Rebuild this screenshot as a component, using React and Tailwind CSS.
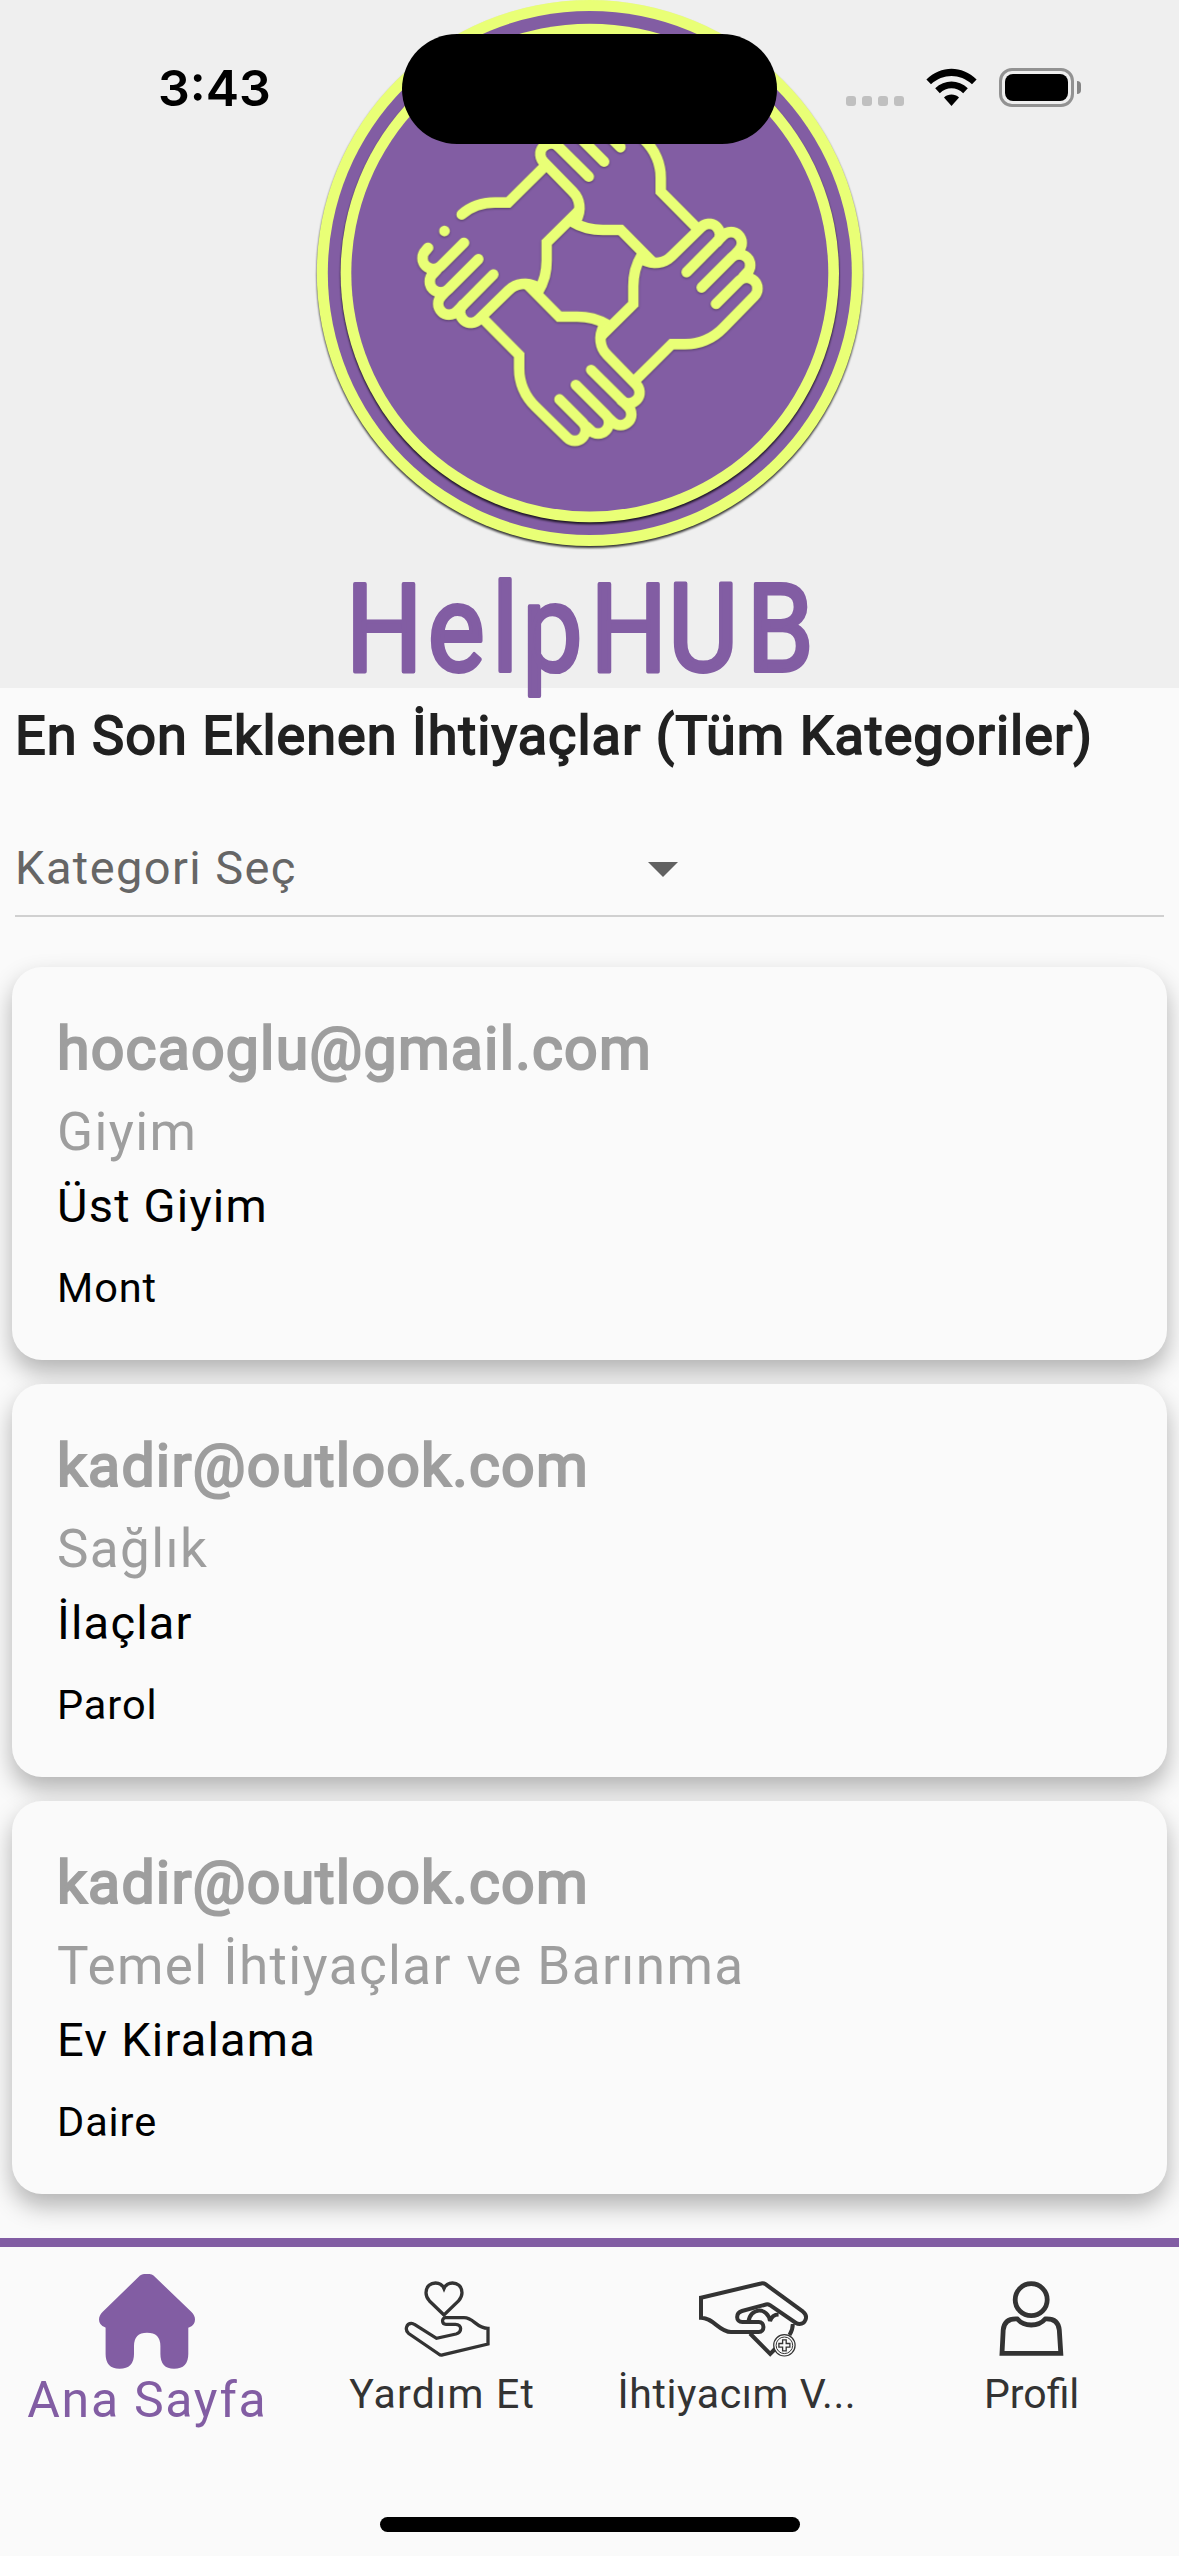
const YELLOW = "#e9ff76";
const PURPLE = "#825da3";

const needs = [
  { email: "hocaoglu@gmail.com", category: "Giyim", sub: "Üst Giyim", item: "Mont" },
  { email: "kadir@outlook.com", category: "Sağlık", sub: "İlaçlar", item: "Parol" },
  { email: "kadir@outlook.com", category: "Temel İhtiyaçlar ve Barınma", sub: "Ev Kiralama", item: "Daire" },
];

function Hand({ angle, open }) {
  return (
    <g transform={`rotate(${angle} 568.5 430)`}>
      {open ? (
        <>
          <path d="M250 568L356 675V715C356 755 368 788 392 815" />
          <path d="M441.500 866.500h.1" />
          <path d="M492 916L500 923A32 32 0 0 0 546 877L477 808" />
        </>
      ) : (
        <path d="M250 568L356 675V715C356 765 375 800 405 830L500 923A32 32 0 0 0 546 877L477 808" />
      )}
      <path d="M558 890L570 901A32 32 0 0 0 616 855L526 765" />
      <path d="M625 865L637 876A32 32 0 0 0 683 830L572 720" />
      <path d="M664 812A32 32 0 0 0 706 763L620 675C597 652 594 618 610 588" />
      <path d="M385 468L476 560H530C565 560 592 567 618 583" />
    </g>
  );
}

function Emblem() {
  return (
    <svg className="block h-[552px] w-[552px]" viewBox="313.500 0 552 552" fill="none">
      <circle className="drop-shadow-[0_2px_1px_rgba(0,0,0,0.8)]" cx="589.300" cy="273" r="273" fill={YELLOW} />
      <circle cx="589.300" cy="273" r="262" fill={PURPLE} />
      <circle className="drop-shadow-[0_2px_1px_rgba(0,0,0,0.8)]" cx="589.300" cy="273" r="249.200" fill={YELLOW} />
      <circle cx="589.300" cy="273" r="238.500" fill={PURPLE} />
      <g className="drop-shadow-[0_1px_1px_rgba(0,0,0,0.35)]">
        <g transform="translate(400 130) scale(.33333)" stroke={YELLOW} strokeWidth="32" strokeLinecap="round">
          <Hand angle={0} />
          <Hand angle={90} open />
          <Hand angle={180} />
          <Hand angle={270} />
        </g>
      </g>
    </svg>
  );
}

function Wordmark() {
  return (
    <svg className="absolute top-[540px] left-[310px] h-[172px] w-[560px]" viewBox="-20 -20 560 172">
      <text
        transform="scale(.88 1)"
        x="18.3 111 184 218.5 296 384.5 473.5"
        y="111"
        fontFamily="Roboto, sans-serif"
        fontSize="122"
        fill={PURPLE}
        stroke={PURPLE}
        strokeWidth="4"
        strokeLinejoin="round"
      >
        HelpHUB
      </text>
    </svg>
  );
}

function StatusBar() {
  return (
    <div className="absolute inset-x-0 top-0 h-[144px]">
      <div className="absolute top-[58px] left-[158px] font-[Inter,sans-serif] text-[50px] leading-[60px] font-semibold text-black">3:43</div>
      <div className="absolute top-[34px] left-[402px] h-[110px] w-[375px] rounded-full bg-black" />
      <div className="absolute top-[96px] left-[846px] flex gap-[6px]">
        {[0, 1, 2, 3].map((i) => (
          <span key={i} className="size-[10px] rounded-[3px] bg-[#c0c0c0]" />
        ))}
      </div>
      <svg className="absolute top-[68px] left-[926px] h-[39px] w-[51px]" viewBox="0 0 51 39">
        <path d="M.4 11.500C15-2.700 36-2.700 50.600 11.500L46 16.300C34 5.200 17 5.200 5 16.300Z" />
        <path d="M9.200 20.300C18.500 11.300 32.500 11.300 41.800 20.300L37.200 25.200C30.500 18.700 20.500 18.700 13.800 25.200Z" />
        <path d="M18 29.400C22.400 25.600 28.600 25.600 33 29.400L25.500 38Z" />
      </svg>
      <div className="absolute top-[68px] left-[999px] h-[39px] w-[75px] rounded-[13px] border-3 border-[#929292] p-[3px]">
        <div className="h-full w-full rounded-[8px] bg-black" />
      </div>
      <div className="absolute top-[81px] left-[1077px] h-[13px] w-[4px] rounded-r-full bg-[#858585]" />
    </div>
  );
}

function NeedCard({ need }) {
  return (
    <article className="h-[393px] rounded-[30px] bg-[#fafafa] px-[45px] pt-[46px] shadow-[0_12px_24px_rgba(0,0,0,0.29)]">
      <h2 className="text-[59px] leading-[72px] tracking-[1.2px] text-[#9e9e9e] [-webkit-text-stroke:2.2px_#9e9e9e]">{need.email}</h2>
      <p className="mt-[14px] text-[53px] leading-[66px] tracking-[1.4px] text-[#9e9e9e]">{need.category}</p>
      <p className="mt-[11px] text-[47px] leading-[60px] tracking-[1.2px] text-black">{need.sub}</p>
      <p className="mt-[25px] text-[41.5px] leading-[54px] tracking-[0.9px] text-black">{need.item}</p>
    </article>
  );
}

function HomeIcon() {
  return (
    <svg className="h-[95px] w-[96px]" viewBox="0 0 96 95" fill={PURPLE}>
      <path d="M41 1.500Q43 0 45 0H50.500Q53 0 54.500 1.500L92.500 38Q96 41.500 96 45.500Q96 51 90.500 53.300Q89.300 53.500 89.300 54V80Q89.300 94.700 75 94.700Q61.400 94.700 61.400 80V72Q61.400 58.700 48 58.700Q35 58.700 35 72V80Q35 94.700 20.500 94.700Q6.600 94.700 6.600 80V54Q6.600 53.500 6 53.300Q0 51 0 45.500Q0 41.500 3.500 38Z" />
    </svg>
  );
}

function HeartHandIcon() {
  return (
    <svg className="h-[76px] w-[98px]" viewBox="-11 0 98 76" fill="none" stroke="#333" strokeWidth="3.300">
      <path d="M40 34L25.500 20C22 16 22 13 22 11.700C22 5 27 2 31.500 2C36 2 38.500 4 40 7.500C41.500 4 44 2 48.500 2C53 2 58 5 58 11.700C58 14 57 17 54.500 20Z" />
      <path d="M84 47.300V63L38.500 73.900Q36.500 74.500 35 73.200L4.700 52.500C.5 49 2.300 42.300 7.400 42.300Q9 42.300 10.500 43.500L32.500 57.300L52 53C58 51.500 58.500 43.300 51.500 43.300H42C37.500 43.300 37.500 36.700 41.500 36.700H60C70 36.700 72 47.300 84 47.300Z" />
    </svg>
  );
}

function GiveIcon() {
  return (
    <svg className="h-[76px] w-[144px]" viewBox="-34 0 144 76" fill="none" stroke="#333" strokeWidth="4">
      <path d="M2 16.700L62 2.500Q64.500 1.800 66.500 3.200L104 30.700C110 35.500 106 43 100.600 43Q98.500 43 97 42L71 24.200Q69 23 67 23.500L43 30C36.500 32 36.500 41 43.300 41H59.800C66 41 66 51 59.800 51H32C20 51 15 37 2 36.700Z" />
      <path d="M49.500 41C51 26 69 26 71 40C72.500 35.500 75.500 33.500 79.600 33.500M93.800 43Q93.800 49 90.500 54M51 52.500L71.200 73L76 68" />
      <circle cx="85.400" cy="64.300" r="10.700" fill="#fafafa" strokeWidth="1.200" />
      <circle cx="85.400" cy="64.300" r="8.300" strokeWidth="1" />
      <path d="M83.600 58.800h3.600v3.700h3.700v3.600h-3.700v3.700h-3.600v-3.700h-3.700v-3.600h3.700z" strokeWidth="1.300" />
    </svg>
  );
}

function ProfileIcon() {
  return (
    <svg className="h-[76px] w-[65px]" viewBox="0 0 65 76" fill="none" stroke="#333" strokeWidth="4.800">
      <circle cx="32.200" cy="18.700" r="16" />
      <path d="M3 72.300L4.200 49C5 41 10 37.500 18.400 38C25 46 39.400 46 46.200 38C54.500 37.500 59.500 41 60.300 49L61.800 72.300Z" />
    </svg>
  );
}

const tabs = [
  { label: "Yardım Et", Icon: HeartHandIcon, tracking: "tracking-[1.2px]" },
  { label: "İhtiyacım V...", Icon: GiveIcon, tracking: "tracking-[0.6px]" },
  { label: "Profil", Icon: ProfileIcon, tracking: "tracking-normal" },
];

export default function App() {
  return (
    <div className="relative flex h-[2556px] w-[1179px] flex-col overflow-hidden bg-[#fafafa] font-[Roboto,sans-serif]">
      <header className="relative flex h-[688px] shrink-0 justify-center bg-[#efefef]">
        <Emblem />
        <Wordmark />
      </header>
      <StatusBar />
      <main className="flex flex-1 flex-col">
        <h1 className="mt-[18px] px-[15px] text-[54px] leading-[60px] tracking-[1.04px] whitespace-nowrap text-[#212121] [-webkit-text-stroke:1.8px_#212121]">
          En Son Eklenen İhtiyaçlar (Tüm Kategoriler)
        </h1>
        <div className="mx-[15px] mt-[72px] flex h-[79px] items-start border-b-2 border-[#d0d0d0]">
          <span className="w-[633px] text-[47px] leading-[60px] tracking-[1.4px] text-[#666]">Kategori Seç</span>
          <svg className="mt-[24px] h-[15px] w-[30px]" viewBox="0 0 30 15" fill="#616161">
            <path d="M0 0H30L15 15Z" />
          </svg>
        </div>
        <div className="mx-[12px] mt-[50px] flex flex-col gap-[24px]">
          {needs.map((need, i) => (
            <NeedCard key={i} need={need} />
          ))}
        </div>
      </main>
      <nav className="grid h-[318px] shrink-0 grid-cols-4 border-t-9 border-[#825da3]">
        <a className="flex flex-col items-center pt-[27px] text-[50px] leading-[60px] tracking-[1.7px] whitespace-nowrap text-[#825da3]">
          <HomeIcon />
          <span className="mt-[1px]">Ana Sayfa</span>
        </a>
        {tabs.map(({ label, Icon, tracking }) => (
          <a key={label} className="flex flex-col items-center pt-[34px] text-[41px] leading-[50px] whitespace-nowrap text-[#333]">
            <Icon />
            <span className={`mt-[12px] ${tracking}`}>{label}</span>
          </a>
        ))}
      </nav>
      <div className="absolute bottom-[24px] left-[380px] h-[15px] w-[420px] rounded-full bg-black" />
    </div>
  );
}
